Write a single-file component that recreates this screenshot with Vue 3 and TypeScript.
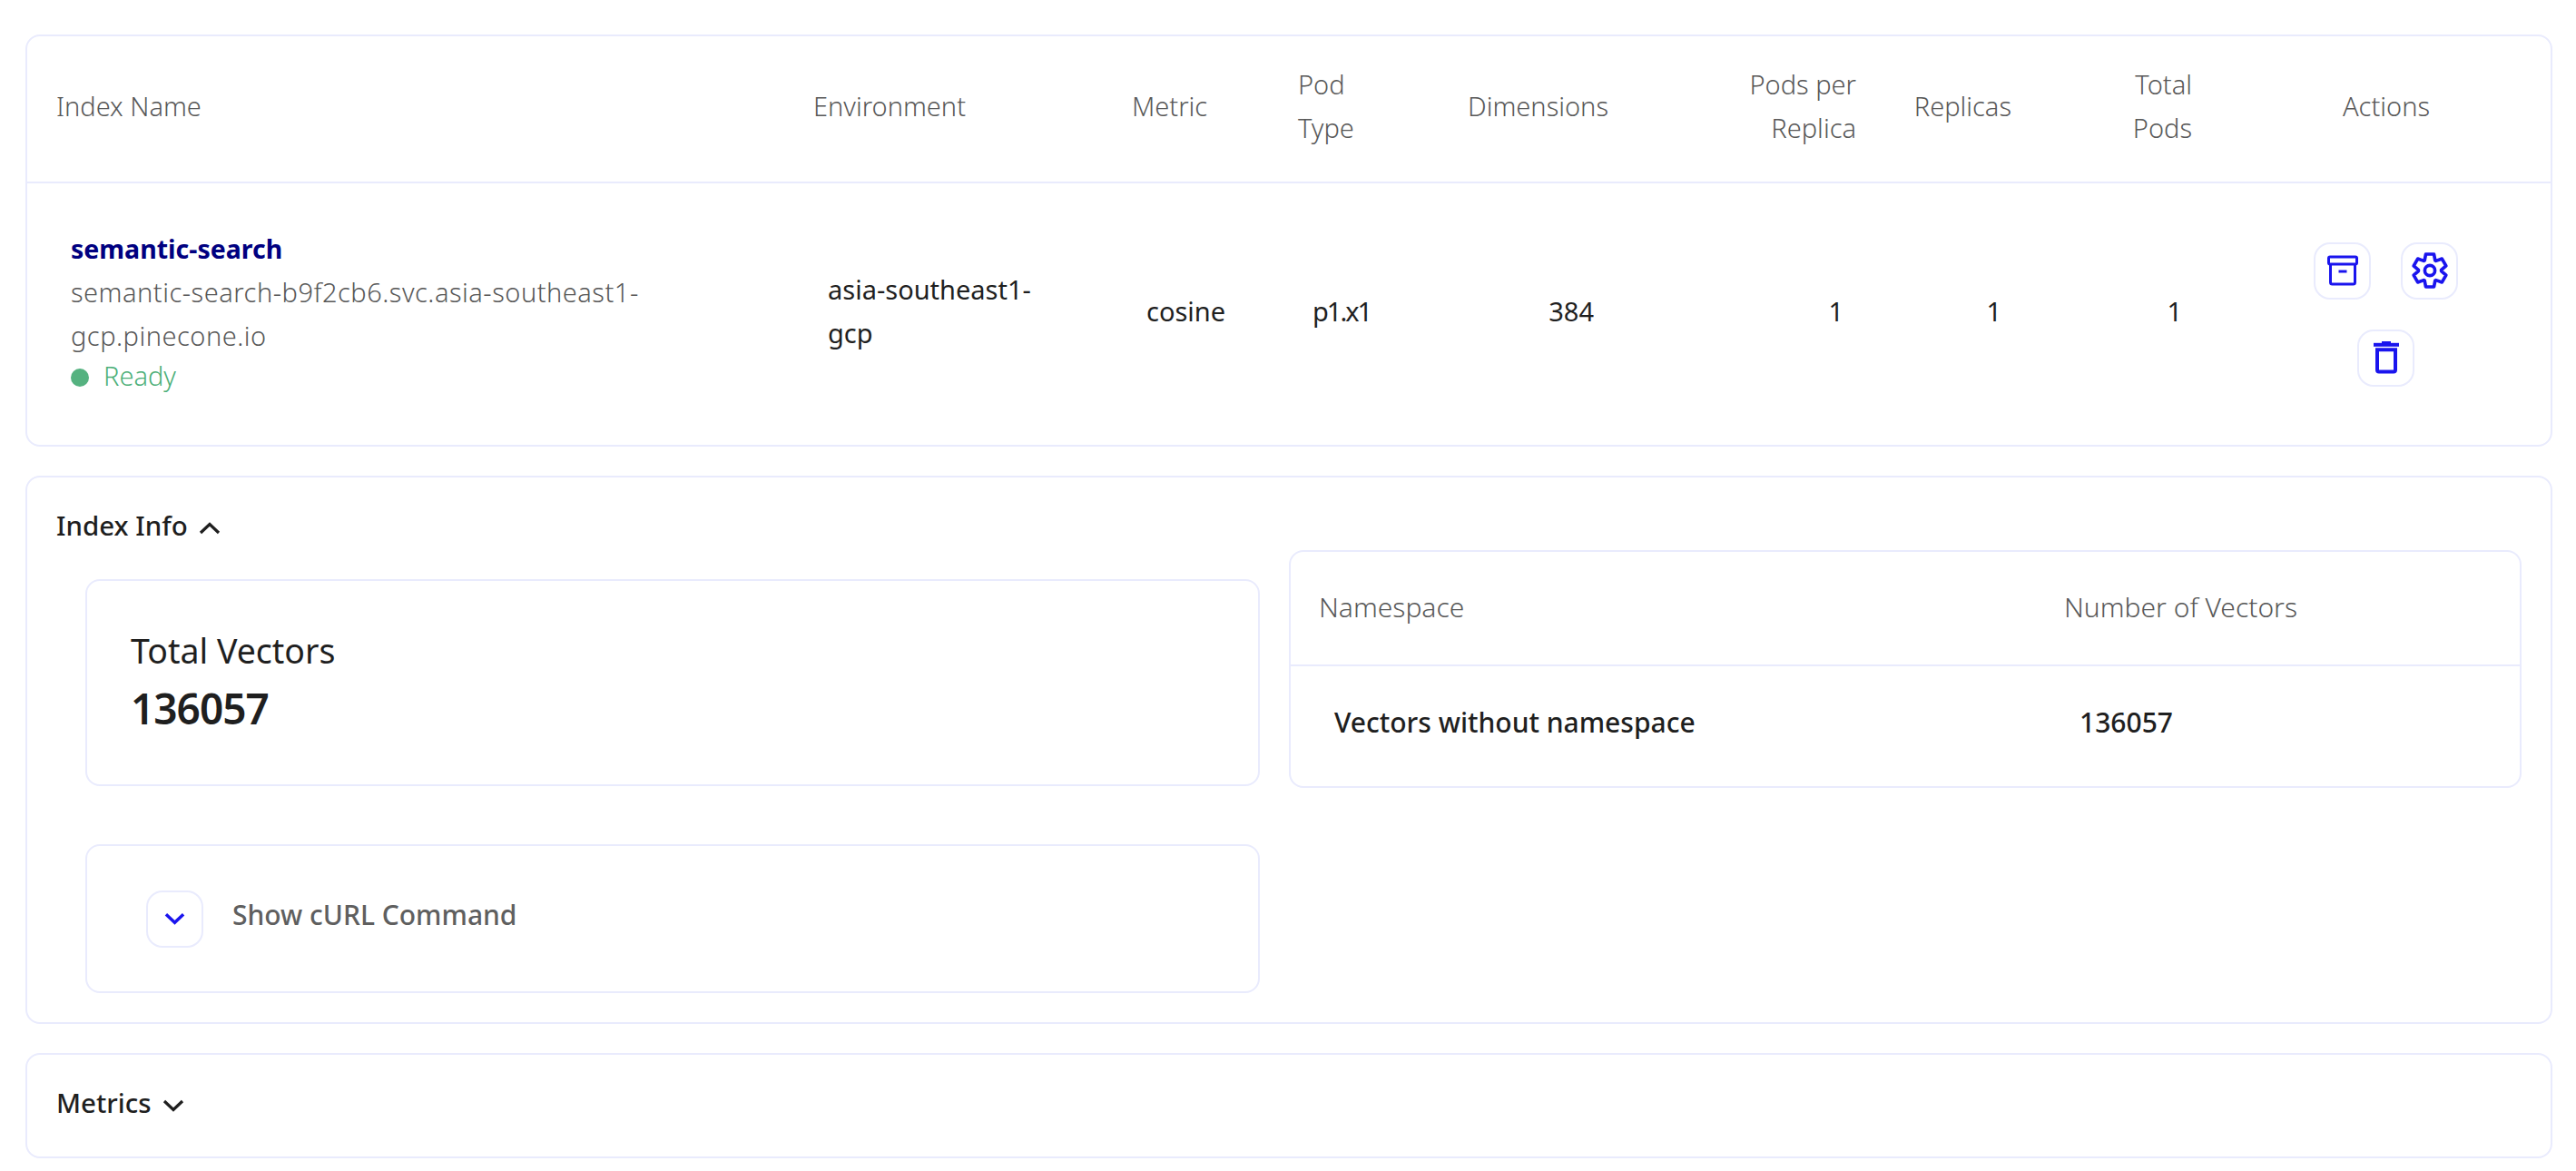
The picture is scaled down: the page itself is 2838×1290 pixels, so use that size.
<script setup lang="ts">
const gear = (() => {
  const cx = 12, cy = 12;
  const pts: string[] = [];
  for (let i = 0; i < 6; i++) {
    const a = (i * 60 - 90) * Math.PI / 180;
    const w = 0.34;
    const add = (r: number, t: number) => {
      const x = cx + r * Math.cos(a + t), y = cy + r * Math.sin(a + t);
      pts.push(`${x.toFixed(2)},${y.toFixed(2)}`);
    };
    add(7.2, -0.48); add(10.6, -w * 0.72); add(10.6, w * 0.72); add(7.2, 0.48);
  }
  return pts.join(' ');
})();
</script>

<template>
  <div class="page">
    <section class="card">
      <div class="grid head">
        <div class="c first">Index Name</div>
        <div class="c">Environment</div>
        <div class="c">Metric</div>
        <div class="c">Pod Type</div>
        <div class="c r">Dimensions</div>
        <div class="c r">Pods per Replica</div>
        <div class="c r rep">Replicas</div>
        <div class="c r total">Total Pods</div>
        <div class="c m">Actions</div>
      </div>
      <div class="grid body">
        <div class="b bfirst">
          <div class="name">semantic-search</div>
          <div class="host">semantic-search-b9f2cb6.svc.asia-southeast1-gcp.pinecone.io</div>
          <div class="ready"><span class="dot"></span>Ready</div>
        </div>
        <div class="b env">asia-southeast1-gcp</div>
        <div class="b">cosine</div>
        <div class="b pod">p1.x1</div>
        <div class="b r">384</div>
        <div class="b r one">1</div>
        <div class="b r brep">1</div>
        <div class="b r one">1</div>
        <div class="actions">
          <button class="ib">
            <svg viewBox="0 0 34 34" width="34" height="34" fill="none" stroke="currentColor" stroke-width="3" stroke-linejoin="round">
              <rect x="1.5" y="2" width="31" height="8" rx="1.5" />
              <path d="M3.5 10v20a2 2 0 0 0 2 2h23a2 2 0 0 0 2-2V10" />
              <path d="M12.500 18h9" />
            </svg>
          </button>
          <button class="ib">
            <svg viewBox="0 0 24 24" width="42" height="42" fill="none" stroke="currentColor" stroke-width="2.1" stroke-linejoin="round">
              <polygon :points="gear" />
              <circle cx="12" cy="12" r="3.2" />
            </svg>
          </button>
          <button class="ib">
            <svg viewBox="0 0 28 36" width="28" height="36" fill="none" stroke="currentColor" stroke-width="4">
              <path d="M0 3.800h28" />
              <path d="M9 1h10" stroke-width="2" />
              <path d="M4 9.300v22.300a2 2 0 0 0 2 2h16a2 2 0 0 0 2-2V9.300z" />
            </svg>
          </button>
        </div>
      </div>
    </section>

    <section class="card info">
      <div class="left">
        <h3 class="title top">Index Info
          <svg class="chev" viewBox="0 0 24 14" width="24" height="14" fill="none" stroke="currentColor" stroke-width="3.200"><path d="M2 12l10-9.500L22 12" /></svg>
        </h3>
        <div class="card stat">
          <div class="st">Total Vectors</div>
          <div class="sv">136057</div>
        </div>
        <div class="card curl">
          <button class="ib">
            <svg viewBox="0 0 24 14" width="23" height="14" fill="none" stroke="currentColor" stroke-width="3.600"><path d="M2 2l10 9.500L22 2" /></svg>
          </button>
          <span class="show">Show cURL Command</span>
        </div>
      </div>
      <div class="card ns">
        <div class="nsgrid nshead">
          <div>Namespace</div>
          <div>Number of Vectors</div>
        </div>
        <div class="nsgrid nsbody">
          <div>Vectors without namespace</div>
          <div>136057</div>
        </div>
      </div>
    </section>

    <section class="card metrics">
      <h3 class="title">Metrics
        <svg class="chev" viewBox="0 0 24 14" width="24" height="14" fill="none" stroke="currentColor" stroke-width="3.200"><path d="M2 2l10 9.500L22 2" /></svg>
      </h3>
    </section>
  </div>
</template>

<style scoped>
.page {
  width: 2838px;
  height: 1290px;
  box-sizing: border-box;
  padding: 38px 26px 0 28px;
  display: flex;
  flex-direction: column;
  gap: 32px;
  font-family: "Noto Sans", sans-serif;
  font-size: 29px;
  line-height: 48px;
  color: #1f1f1f;
  background: #fff;
}
.card {
  border: 2px solid #e9ebfd;
  border-radius: 16px;
  box-sizing: border-box;
  background: #fff;
}
.grid {
  display: grid;
  grid-template-columns: 832px 351px 183px 187px 223px 273px 171px 202px 1fr;
}
.head {
  height: 160px;
  border-bottom: 2px solid #e9ebfd;
  align-items: center;
  color: #585858;
  font-weight: 300;
}
.body {
  height: 288px;
  align-items: center;
}
.c { padding: 0 34px 6px; }
.first { padding-left: 32px; }
.rep { padding-left: 10px; padding-right: 34px; }
.total { padding-left: 34px; padding-right: 37px; }
.m { padding-right: 38px; padding-left: 34px; }
.b { padding: 0 50px 6px; }
.bfirst { padding-left: 48px; padding-bottom: 8px; }
.one { padding-right: 48px; }
.brep { padding-right: 45px; }
.pod { letter-spacing: -2px; }
.r { text-align: right; }
.m { text-align: center; }
.env { width: 351px; box-sizing: border-box; }
.name { color: #000080; font-weight: 700; font-size: 28.500px; }
.host { color: #585858; font-weight: 300; letter-spacing: 0.5px; }
.ready {
  color: #4caf78;
  font-weight: 300;
  display: flex;
  align-items: center;
  gap: 16px;
  line-height: 40px;
}
.dot { width: 20px; height: 20px; border-radius: 50%; background: #55b280; margin-top: 4px; }
.actions {
  display: flex;
  flex-wrap: wrap;
  justify-content: center;
  gap: 33px;
  padding: 0 65px 0 60px;
}
.ib {
  width: 63px;
  height: 63px;
  box-sizing: border-box;
  padding: 0;
  border: 2px solid #e9ebfd;
  border-radius: 18px;
  background: #fff;
  color: #1a14ee;
  display: flex;
  align-items: center;
  justify-content: center;
}
.info {
  height: 604px;
  display: grid;
  grid-template-columns: 1358px 1358px;
  column-gap: 32px;
}
.title {
  margin: 0;
  font-size: 29.500px;
  font-weight: 500;
  display: flex;
  align-items: center;
  gap: 12px;
  padding-bottom: 6px;
}
.top { height: 112px; box-sizing: border-box; padding-left: 32px; }
.chev { color: #1f1f1f; margin-top: 6px; }
.stat {
  height: 228px;
  width: 1294px;
  margin-left: 64px;
  padding: 53px 48px 0;
}
.st { font-size: 37.500px; line-height: 48px; }
.sv { font-size: 46px; letter-spacing: -1px; line-height: 64px; font-weight: 600; margin-top: 7px; }
.curl {
  margin-top: 64px;
  margin-left: 64px;
  height: 164px;
  width: 1294px;
  padding: 0 65px;
  display: flex;
  align-items: center;
  gap: 32px;
}
.show { color: #5f5f5f; font-weight: 500; font-size: 30px; padding-bottom: 8px; }
.ns { height: 262px; margin-top: 80px; }
.nsgrid { display: grid; grid-template-columns: 821px 1fr; align-items: center; font-size: 30px; }
.nshead { padding: 0 31px 2px; height: 122px; border-bottom: 2px solid #e9ebfd; color: #585858; font-weight: 300; }
.nsbody { height: 132px; padding: 0 48px 9px; box-sizing: border-box; font-weight: 500; }
.metrics { height: 116px; padding: 0 32px; display: flex; align-items: center; }
</style>
